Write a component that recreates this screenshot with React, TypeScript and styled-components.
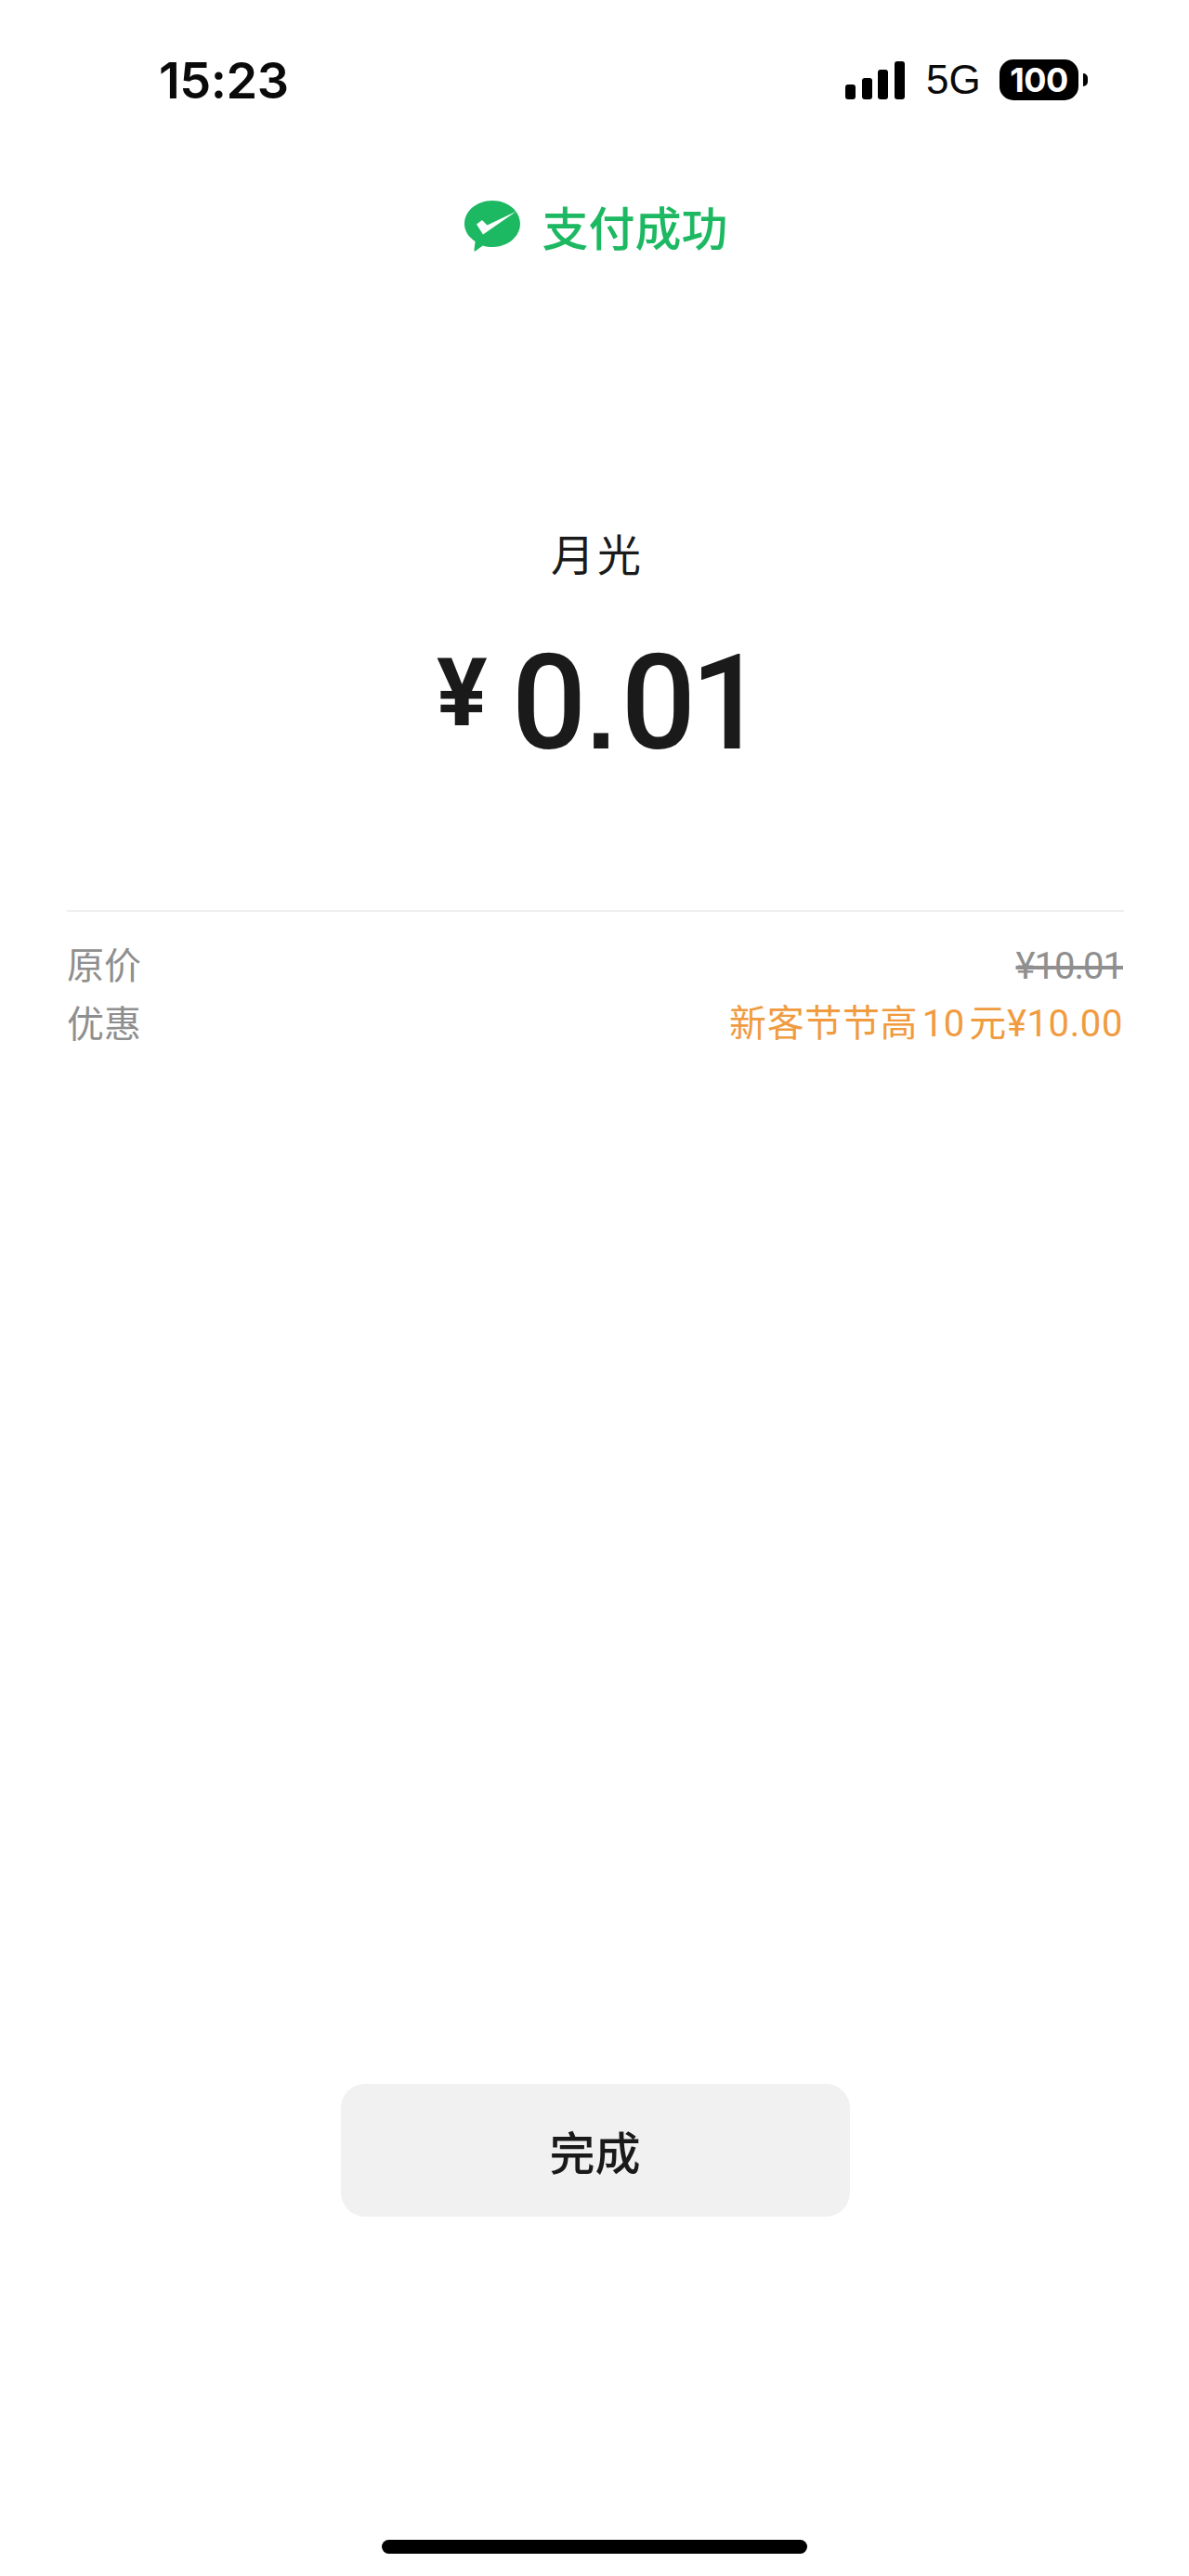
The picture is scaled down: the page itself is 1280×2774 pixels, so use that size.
import styled, { createGlobalStyle } from "styled-components";

const CJK = `"Noto Sans CJK SC", sans-serif`;
const LATIN = `Roboto, "Noto Sans CJK SC", sans-serif`;

const GlobalStyle = createGlobalStyle`
  html, body {
    margin: 0;
    padding: 0;
    background: #ffffff;
  }
`;

const SIGNAL_BARS = [16, 23, 32, 41];

const WeChatLogo = () => (
  <svg width="60" height="55" viewBox="0 0 60 55">
    <path
      d="M30 0C46.6 0 60 11.2 60 25S46.6 50 30 50c-3.6 0-7-.5-10.200-1.500L11.500 54.500c-.8.400-1.300-.100-1.100-1L11.600 44C4.500 39.500 0 32.700 0 25 0 11.200 13.400 0 30 0Z"
      fill="#1db862"
    />
    <path d="M13 25.500 19 21 24.500 26.500 56 11.500 20 36.500Z" fill="#ffffff" />
  </svg>
);

const App = () => (
  <Page>
    <GlobalStyle />
    <StatusBar>
      <Time>15:23</Time>
      <Indicators>
        <Signal>
          {SIGNAL_BARS.map((h) => (
            <SignalBar key={h} $height={h} />
          ))}
        </Signal>
        <Network>5G</Network>
        <Battery>
          <BatteryBody>100</BatteryBody>
          <BatteryCap />
        </Battery>
      </Indicators>
    </StatusBar>

    <SuccessRow>
      <WeChatLogo />
      <SuccessText>支付成功</SuccessText>
    </SuccessRow>

    <Merchant>月光</Merchant>
    <Amount>
      <Currency>¥</Currency>
      <Value>
        0<Dot>.</Dot>01
      </Value>
    </Amount>

    <Details>
      <DetailRow>
        <Label>原价</Label>
        <Struck>¥10.01</Struck>
      </DetailRow>
      <DetailRow>
        <Label>优惠</Label>
        <Discount>新客节节高 10 元¥10.00</Discount>
      </DetailRow>
    </Details>

    <DoneButton>完成</DoneButton>
    <HomeBar />
  </Page>
);

export default App;

const Page = styled.div`
  width: 1280px;
  height: 2774px;
  display: flex;
  flex-direction: column;
  align-items: center;
  overflow: hidden;
  background: #ffffff;
  color: #1a1a1a;
`;

const StatusBar = styled.div`
  width: 100%;
  height: 44px;
  margin-top: 64px;
  padding: 0 109px 0 171px;
  box-sizing: border-box;
  display: flex;
  align-items: center;
  justify-content: space-between;
`;

const Time = styled.div`
  padding-top: 2px;
  font-family: Inter, sans-serif;
  font-size: 54px;
  font-weight: 600;
  line-height: 44px;
  color: #0a0a0a;
  letter-spacing: -0.5px;
`;

const Indicators = styled.div`
  display: flex;
  align-items: center;
`;

const Signal = styled.div`
  width: 64px;
  height: 41px;
  display: flex;
  align-items: flex-end;
  justify-content: space-between;
`;

const SignalBar = styled.div<{ $height: number }>`
  width: 11px;
  height: ${(p) => p.$height}px;
  border-radius: 3px;
  background: #000000;
`;

const Network = styled.div`
  margin-left: 23px;
  width: 60px;
  font-family: "Liberation Sans", sans-serif;
  font-size: 44px;
  line-height: 44px;
  color: #0a0a0a;
`;

const Battery = styled.div`
  margin-left: 19px;
  display: flex;
  align-items: center;
  gap: 5px;
`;

const BatteryBody = styled.div`
  width: 85px;
  height: 44px;
  border-radius: 15px;
  background: #000000;
  color: #ffffff;
  font-family: Inter, sans-serif;
  font-size: 36px;
  font-weight: 700;
  line-height: 44px;
  text-align: center;
  letter-spacing: -0.5px;
`;

const BatteryCap = styled.div`
  width: 5px;
  height: 14px;
  border-radius: 0 7px 7px 0;
  background: #000000;
`;

const SuccessRow = styled.div`
  margin-top: 108px;
  margin-left: 3px;
  height: 55px;
  display: flex;
  align-items: center;
  gap: 24px;
`;

const SuccessText = styled.div`
  font-family: ${CJK};
  font-size: 50px;
  font-weight: 500;
  line-height: 55px;
  color: #1db862;
`;

const Merchant = styled.div`
  margin-top: 296px;
  margin-left: 6px;
  font-family: ${CJK};
  font-size: 47px;
  line-height: 56px;
  letter-spacing: 3px;
  color: #1a1a1a;
`;

const Amount = styled.div`
  margin-top: 75px;
  margin-left: 8px;
  height: 120px;
  display: flex;
  align-items: center;
  gap: 26px;
  font-family: Roboto, sans-serif;
  color: #1a1a1a;
`;

const Currency = styled.div`
  margin-top: -24px;
  font-size: 102px;
  font-weight: 700;
  line-height: 100px;
`;

const Value = styled.div`
  padding-top: 10px;
  font-size: 142px;
  font-weight: 500;
  line-height: 120px;
  letter-spacing: -6px;
`;

const Dot = styled.span`
  font-family: "Liberation Sans", sans-serif;
  font-size: 112px;
  font-weight: 700;
  letter-spacing: 0;
  margin: 0 6px;
`;

const Details = styled.div`
  width: 1138px;
  margin-top: 162px;
  margin-left: 2px;
  padding-top: 27px;
  border-top: 2px solid #efefef;
  display: flex;
  flex-direction: column;
  gap: 7px;
`;

const DetailRow = styled.div`
  height: 56px;
  padding-right: 1px;
  display: flex;
  align-items: center;
  justify-content: space-between;
`;

const Label = styled.div`
  font-family: ${CJK};
  font-size: 40px;
  line-height: 56px;
  color: #8f8f8f;
`;

const Struck = styled.div`
  padding-top: 8px;
  font-family: ${LATIN};
  font-size: 40px;
  line-height: 56px;
  letter-spacing: -1px;
  color: #8f8f8f;
  text-decoration: line-through;
`;

const Discount = styled.div`
  padding-top: 6px;
  font-family: ${LATIN};
  font-size: 40px;
  line-height: 56px;
  letter-spacing: 0.6px;
  word-spacing: -6px;
  color: #f09b3f;
`;

const DoneButton = styled.div`
  width: 548px;
  height: 143px;
  margin-top: 1116px;
  margin-left: 1px;
  border-radius: 26px;
  background: #f1f1f1;
  display: flex;
  align-items: center;
  justify-content: center;
  font-family: ${CJK};
  font-size: 49px;
  font-weight: 500;
  color: #1a1a1a;
`;

const HomeBar = styled.div`
  width: 458px;
  height: 15px;
  margin-top: auto;
  margin-bottom: 24px;
  border-radius: 8px;
  background: #000000;
`;
